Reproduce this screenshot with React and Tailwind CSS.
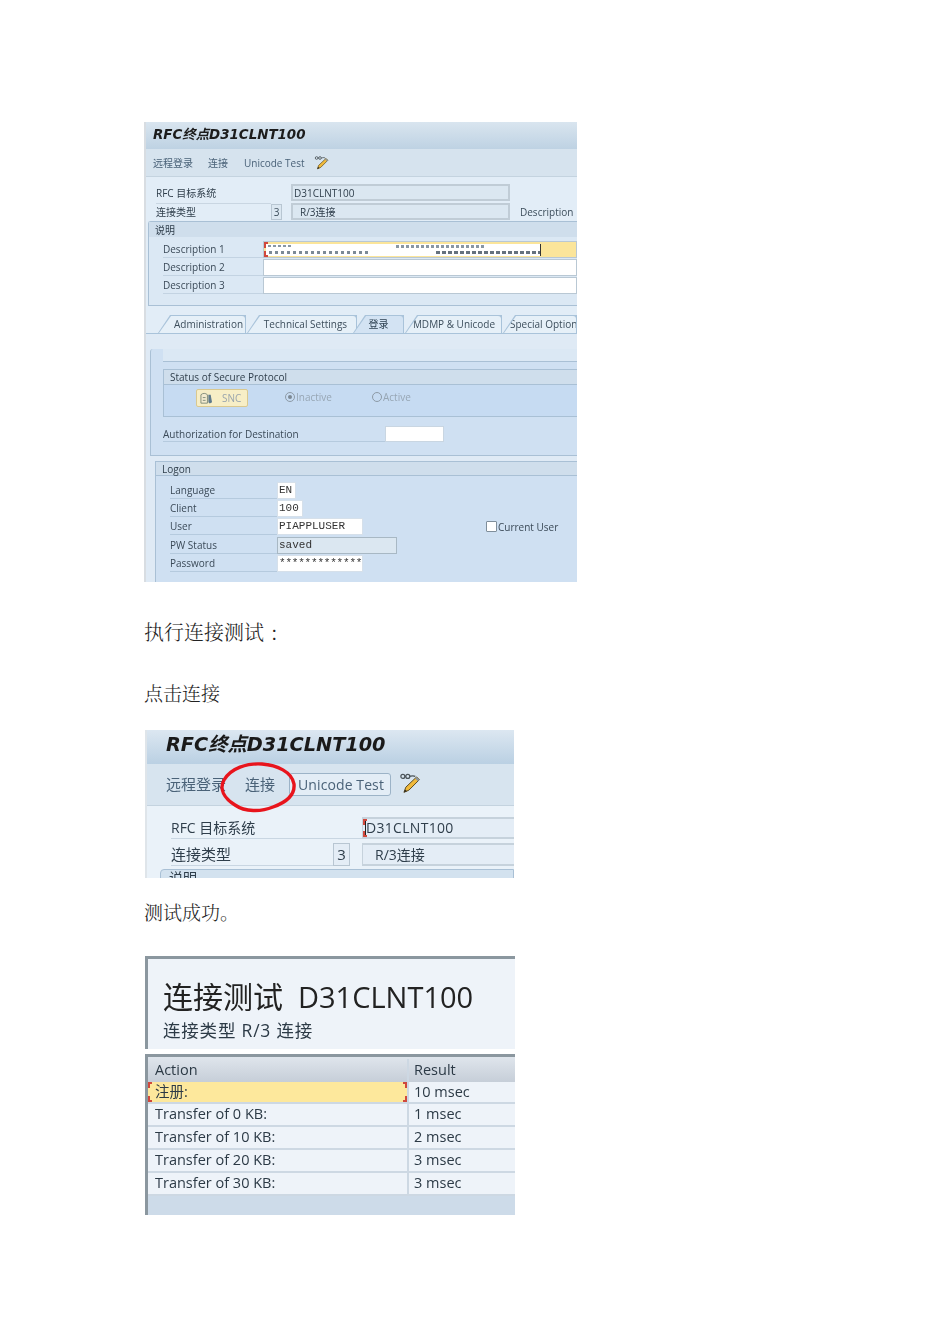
function Brackets({ color = "border-[#d0483c]" }) {
  return (
    <>
      <span className={`absolute left-0 top-0 h-[6px] w-[4px] border-l-2 border-t-2 ${color}`} />
      <span className={`absolute left-0 bottom-0 h-[6px] w-[4px] border-l-2 border-b-2 ${color}`} />
    </>
  );
}

function Pencil({ className }) {
  return (
    <svg viewBox="0 0 20 20" className={className} fill="none">
      <circle cx="3.500" cy="4" r="1.800" stroke="#4a5358" strokeWidth="1.100" />
      <circle cx="8" cy="4" r="1.800" stroke="#4a5358" strokeWidth="1.100" />
      <path d="M5.300 4h.9M9.800 4c2-.5 3-1 5 0" stroke="#4a5358" strokeWidth="1.100" />
      <path d="M16 4.500 18.500 7 9 16.500l-4.500 2 1.700-4.700z" fill="#f0b93a" stroke="#5a4a20" strokeWidth=".9" />
      <path d="M14.800 5.800 17.200 8.300 18.500 7 16 4.500z" fill="#8a94a0" />
      <path d="M5.500 15.800 4.500 18.500l2.800-1.100z" fill="#2e2a22" />
    </svg>
  );
}

function Tab({ w, active, children, ml = "", pad = "pl-[10px]", align = "justify-center" }) {
  return (
    <div className={`relative h-[18px] ${w} ${ml} shrink-0 bg-[#a9c3da] [clip-path:polygon(12px_0,100%_0,100%_100%,0_100%)]`}>
      <div
        className={`absolute inset-x-[1px] bottom-0 top-[1px] flex items-center ${align} ${pad} pb-px whitespace-nowrap rounded-tr-[3px] [clip-path:polygon(12px_0,100%_0,100%_100%,0_100%)] ${
          active ? "bg-[#d3e3f3] text-[#2b3f50]" : "bg-[#e6f0f8] text-[#3d4e5c]"
        }`}
      >
        {children}
      </div>
    </div>
  );
}

function DescRow({ label, children }) {
  return (
    <div className="flex h-[18px] items-center">
      <div className="ml-[14px] flex h-full w-[100px] items-center border-b border-[#c3d3e2] text-[#3b4a58]">{label}</div>
      <div className="relative h-[17px] flex-1 border border-[#b9c8d4] bg-white">{children}</div>
    </div>
  );
}

function LogonRow({ label, children, w, gray, extra }) {
  return (
    <div className="flex h-[18.400px] items-center">
      <div className="ml-[14px] flex h-[17px] w-[107px] items-center border-b border-[#b5cade] text-[#3b4a58]">{label}</div>
      <div
        className={`flex h-[17px] ${w} items-center border px-[1px] font-['Liberation_Mono',monospace] text-[11px] leading-none text-[#333] ${
          gray ? "border-[#a8b8c4] bg-[#dbe7f1]" : "border-[#d6e0ea] bg-white"
        }`}
      >
        {children}
      </div>
      {extra}
    </div>
  );
}

function FirstShot() {
  return (
    <div className="h-[460px] w-[433px] overflow-hidden border-l-2 border-[#d8dde2] bg-[#e2edf7] font-['Open_Sans','Noto_Sans_CJK_SC',sans-serif] text-[10px] leading-none text-[#3d4e5c] blur-[0.35px]">
      <div className="flex h-[27px] items-center bg-gradient-to-b from-[#d9e5ef] to-[#bed2e3] pb-[2px] pl-[7px] font-['DejaVu_Sans','Noto_Sans_CJK_SC',sans-serif] text-[13.400px] font-bold italic text-[#1c1c1c]">
        RFC终点D31CLNT100
      </div>
      <div className="flex h-[28px] items-center border-b border-[#c4d3df] bg-[#d6e3ee] pl-[7px] text-[#4a6278]">
        <span>远程登录</span>
        <span className="ml-[15px]">连接</span>
        <span className="ml-[16px]">Unicode Test</span>
        <Pencil className="ml-[9px] h-[15px] w-[15px]" />
      </div>

      <div className="pl-[10px] pt-[7px]">
        <div className="flex h-[17px] items-center">
          <div className="flex h-full w-[135px] items-center text-[#2f3e4b]">RFC 目标系统</div>
          <div className="flex h-[17px] w-[219px] items-center border-2 border-[#c0ccd6] bg-[#dbe7f1] pl-[1px] text-[#2f3e4b]">D31CLNT100</div>
        </div>
        <div className="mt-[2px] flex h-[17px] items-center">
          <div className="flex h-full w-[115px] items-center border-t border-[#c9d6e2] text-[#2f3e4b]">连接类型</div>
          <div className="flex h-[16px] w-[11px] items-center justify-center border border-[#b8c6d2] bg-[#dbe7f1]">3</div>
          <div className="ml-[9px] flex h-[17px] w-[219px] items-center border-2 border-[#c0ccd6] bg-[#dbe7f1] pl-[7px] text-[#2f3e4b]">R/3连接</div>
          <div className="ml-[10px] text-[#3d4e5c]">Description</div>
        </div>
      </div>

      <div className="ml-[2px] mt-[1px] h-[85px] rounded-tl-[3px] border border-r-0 border-[#a9c0d5] bg-[#dbe8f4]">
        <div className="flex h-[15px] items-center bg-[#cfdeec] pl-[6px] text-[#2f3e4b]">说明</div>
        <div className="pt-[3px]">
          <DescRow label="Description 1">
            <div className="absolute inset-0 bg-[#fbe59a]" />
            <div className="absolute left-[2px] top-[2px] h-[12px] w-[275px] overflow-hidden border-r border-[#333] bg-white">
              <div className="blur-[0.6px]">
                <div className="ml-[2px] mt-[1px] h-[2px] w-[24px] bg-[repeating-linear-gradient(90deg,#8a97a3_0,#8a97a3_3px,#fff_3px,#fff_5px)]" />
                <div className="ml-[130px] -mt-[2px] h-[3px] w-[90px] bg-[repeating-linear-gradient(90deg,#8a97a3_0,#8a97a3_3px,#fff_3px,#fff_5px)]" />
                <div className="ml-[3px] mt-[3px] h-[3px] w-[100px] bg-[repeating-linear-gradient(90deg,#7d8a96_0,#7d8a96_3px,#fff_3px,#fff_6px)]" />
                <div className="ml-[170px] -mt-[3px] h-[3px] w-[104px] bg-[repeating-linear-gradient(90deg,#66727e_0,#66727e_4px,#fff_4px,#fff_6px)]" />
              </div>
            </div>
            <Brackets />
          </DescRow>
          <DescRow label="Description 2" />
          <DescRow label="Description 3" />
        </div>
      </div>

      <div className="ml-[12px] mt-[9px] flex h-[18px] items-end">
        <Tab w="w-[88px]" pad="pl-[13px]">Administration</Tab>
        <Tab w="w-[110px]" ml="ml-[1px]" pad="pl-[7px]">Technical Settings</Tab>
        <Tab w="w-[51px]" ml="-ml-[4px]" active pad="pl-0">登录</Tab>
        <Tab w="w-[97px]" ml="ml-[1px]" pad="pl-[1px]">MDMP &amp; Unicode</Tab>
        <Tab w="w-[74px]" ml="ml-[1px]" pad="pl-[6px]" align="justify-start">Special Option</Tab>
      </div>

      <div className="h-[250px] border-t border-[#a9c3da] bg-[#dfeaf5] pl-[4px] pt-[15px]">
        <div className="h-[107px] rounded-tl-[3px] border-b border-l border-[#a9c0d5] bg-[#cfe0f2] pl-[12px]">
          <div className="h-[12px] bg-[#dbe8f4]" />
          <div className="border-t border-[#a9c0d5]" />
          <div className="mt-[7px] flex h-[16px] items-center border-b border-l border-t border-[#a9c0d5] bg-[#cfdeec] pl-[6px] text-[#2f3e4b]">
            Status of Secure Protocol
          </div>
          <div className="flex h-[32px] items-start border-b border-l border-[#a9c0d5] bg-[#c6dbf2] pl-[32px] pt-[4px]">
            <div className="flex h-[18px] w-[52px] items-center rounded-[2px] border border-[#d9c88f] bg-[#f7eec6] pl-[3px] text-[#9aa5ad]">
              <svg viewBox="0 0 14 14" className="h-[13px] w-[13px]" fill="none">
                <path d="M1 3c2-2 5-2 7 0v9H1z" stroke="#7f8a78" fill="#f4ecd0" />
                <path d="M9 3h2.500l1.500 8-2.500 1.500L9 11z" fill="#5f7a8c" />
                <path d="M3 6h3M3 9h3" stroke="#7f8a78" />
              </svg>
              <span className="ml-[9px]">SNC</span>
            </div>
            <div className="ml-[37px] mt-[3px] flex items-center text-[#97a6b4]">
              <span className="flex h-[10px] w-[10px] items-center justify-center rounded-full border border-[#8d9aa6]">
                <span className="h-[4px] w-[4px] rounded-full bg-[#7c8894]" />
              </span>
              <span className="ml-px">Inactive</span>
            </div>
            <div className="ml-[40px] mt-[3px] flex items-center text-[#97a6b4]">
              <span className="h-[10px] w-[10px] rounded-full border border-[#8d9aa6]" />
              <span className="ml-px">Active</span>
            </div>
          </div>
          <div className="mt-[9px] flex h-[16px] items-center">
            <div className="flex h-full w-[222px] items-center border-b border-[#b5cade] text-[#3b4a58]">Authorization for Destination</div>
            <div className="h-[16px] w-[59px] border border-[#c9d6e2] bg-white" />
          </div>
        </div>

        <div className="ml-[5px] mt-[5px] h-[121px] border-l border-[#a9c0d5] bg-[#cfe0f2]">
          <div className="flex h-[15px] items-center border-b border-t border-[#a9c0d5] bg-[#cfdeec] pl-[6px] text-[#2f3e4b]">Logon</div>
          <div className="pt-[5px]">
            <LogonRow label="Language" w="w-[19px]">EN</LogonRow>
            <LogonRow label="Client" w="w-[26px]">100</LogonRow>
            <LogonRow
              label="User"
              w="w-[86px]"
              extra={
                <div className="ml-[123px] flex items-center text-[#3b4a58]">
                  <span className="h-[11px] w-[11px] rounded-[1px] border border-[#7f8e9b] bg-white" />
                  <span className="ml-px">Current User</span>
                </div>
              }
            >
              PIAPPLUSER
            </LogonRow>
            <LogonRow label="PW Status" w="w-[120px]" gray>saved</LogonRow>
            <LogonRow label="Password" w="w-[86px]">
              <span className="whitespace-nowrap tracking-[-0.200px]">*************</span>
            </LogonRow>
          </div>
        </div>
      </div>
    </div>
  );
}

function SecondShot() {
  return (
    <div className="relative ml-px h-[148px] w-[369px] overflow-hidden border-l-2 border-[#dfe5ea] bg-[#eaf2f9] font-['Open_Sans','Noto_Sans_CJK_SC',sans-serif] text-[15px] leading-none text-[#3d4e5c] blur-[0.35px]">
      <div className="flex h-[34px] items-center bg-gradient-to-b from-[#dce7f1] to-[#bad0e3] pb-[5px] pl-[19px] font-['DejaVu_Sans','Noto_Sans_CJK_SC',sans-serif] text-[19.300px] font-bold italic text-[#1a1a1a]">
        RFC终点D31CLNT100
      </div>
      <div className="flex h-[42px] items-center border-b border-[#c4d3df] bg-[#d7e4ef] pl-[19px] text-[#4a6278]">
        <span className="whitespace-nowrap">远程登录</span>
        <span className="ml-[19px]">连接</span>
        <span className="ml-[14px] flex h-[23px] items-center rounded-[3px] border border-[#9cb3c7] bg-[#e3edf6] pl-[8px] pr-[6px] text-[14px] tracking-[0.100px] whitespace-nowrap">
          Unicode Test
        </span>
        <Pencil className="ml-[8px] -mt-[3px] h-[22px] w-[22px]" />
      </div>

      <div className="pl-[24px] pt-[11px] text-[#2f3e4b]">
        <div className="flex h-[22px] items-center">
          <div className="flex h-full w-[191px] items-center border-b border-[#c9d6e2] text-[14px]">RFC 目标系统</div>
          <div className="relative flex h-[22px] flex-1 items-center border-y-2 border-l border-[#c6d2dc] bg-[#e4edf6] pl-[2px] text-[14px] tracking-[0.300px]">
            <span className="border-l border-[#222]">D31CLNT100</span>
            <Brackets />
          </div>
        </div>
        <div className="mt-[4px] flex h-[23px] items-center">
          <div className="flex h-full w-[162px] items-center border-b border-[#c9d6e2]">连接类型</div>
          <div className="flex h-[23px] w-[17px] items-center justify-center border border-[#b8c6d2] bg-[#e4edf6]">3</div>
          <div className="ml-[12px] flex h-[23px] flex-1 items-center border-y-2 border-l border-[#c6d2dc] bg-[#e4edf6] pl-[12px] text-[14px]">R/3连接</div>
        </div>
      </div>
      <div className="ml-[13px] mt-[3px] h-[20px] rounded-tl-[4px] border border-[#a9c0d5] bg-[#d3e2ef] pl-[8px] pt-[1px] text-[14px] text-[#2f3e4b]">说明</div>

      <svg viewBox="0 0 78 52" className="absolute left-[72px] top-[32px] h-[52px] w-[78px]" fill="none">
        <path
          d="M5 18C12 6 28 1 43 2c15 1 30 8 32 20 1 10-7 18-21 23-12 5-28 5-38-2C5 36 0 27 5 18z"
          stroke="#e8141c"
          strokeWidth="3.400"
        />
      </svg>
    </div>
  );
}

function Row({ action, result, active }) {
  return (
    <div className={`flex ${active ? "h-[22px]" : "h-[23px]"} border-b-2 border-[#cdd8e3] bg-[#eef3f9] text-[#2c3a46]`}>
      <div className={`relative flex w-[261px] items-center border-r-2 border-[#cdd8e3] pl-[7px] ${active ? "bg-[#fde89c]" : ""}`}>
        {action}
        {active && (
          <>
            <Brackets />
            <span className="absolute right-0 top-0 h-[6px] w-[4px] border-r-2 border-t-2 border-[#d0483c]" />
            <span className="absolute bottom-0 right-0 h-[6px] w-[4px] border-b-2 border-r-2 border-[#d0483c]" />
          </>
        )}
      </div>
      <div className="flex flex-1 items-center pl-[5px]">{result}</div>
    </div>
  );
}

function ThirdShot() {
  return (
    <div className="ml-px h-[259px] w-[370px] overflow-hidden bg-white font-['Open_Sans','Noto_Sans_CJK_SC',sans-serif] leading-none text-[#2c3a46] blur-[0.35px]">
      <div className="h-[93px] border-l-[3px] border-t-[3px] border-[#8b979f] bg-[#eef3f9] pl-[15px] pt-[22px]">
        <div className="whitespace-nowrap text-[30px] leading-[32px] text-[#222]">
          连接测试
          <span className="ml-[15px] text-[29px]">D31CLNT100</span>
        </div>
        <div className="mt-[7px] whitespace-nowrap text-[17.500px] leading-[20px] tracking-[0.800px]">连接类型 R/3 连接</div>
      </div>
      <div className="mt-[5px] h-[161px] border-l-[3px] border-t-[3px] border-[#8b979f] bg-[#cddbe9] text-[14.500px]">
        <div className="flex h-[25px] bg-gradient-to-b from-[#dfe5ec] to-[#c6ced8] pt-[2px]">
          <div className="flex w-[261px] items-center border-r-2 border-[#cdd8e3] pl-[7px]">Action</div>
          <div className="flex flex-1 items-center pl-[5px]">Result</div>
        </div>
        <Row action="注册:" result="10 msec" active />
        <Row action="Transfer of 0 KB:" result="1 msec" />
        <Row action="Transfer of 10 KB:" result="2 msec" />
        <Row action="Transfer of 20 KB:" result="3 msec" />
        <Row action="Transfer of 30 KB:" result="3 msec" />
      </div>
    </div>
  );
}

export default function App() {
  return (
    <div className="h-[1344px] w-[950px] overflow-hidden bg-white pl-[144px] pt-[122px] font-['Noto_Serif_CJK_SC','Noto_Sans_CJK_SC',serif] text-[#222]">
      <FirstShot />
      <p className="mt-[36px] h-[28px] text-[20px] font-light leading-[28px]">
        执行连接测试<span className="ml-[7px]">:</span>
      </p>
      <p className="mt-[33px] h-[28px] text-[19px] font-light leading-[28px]">点击连接</p>
      <div className="mt-[23px]">
        <SecondShot />
      </div>
      <p className="mt-[20px] h-[28px] text-[19px] font-light leading-[28px]">测试成功。</p>
      <div className="mt-[30px]">
        <ThirdShot />
      </div>
    </div>
  );
}
